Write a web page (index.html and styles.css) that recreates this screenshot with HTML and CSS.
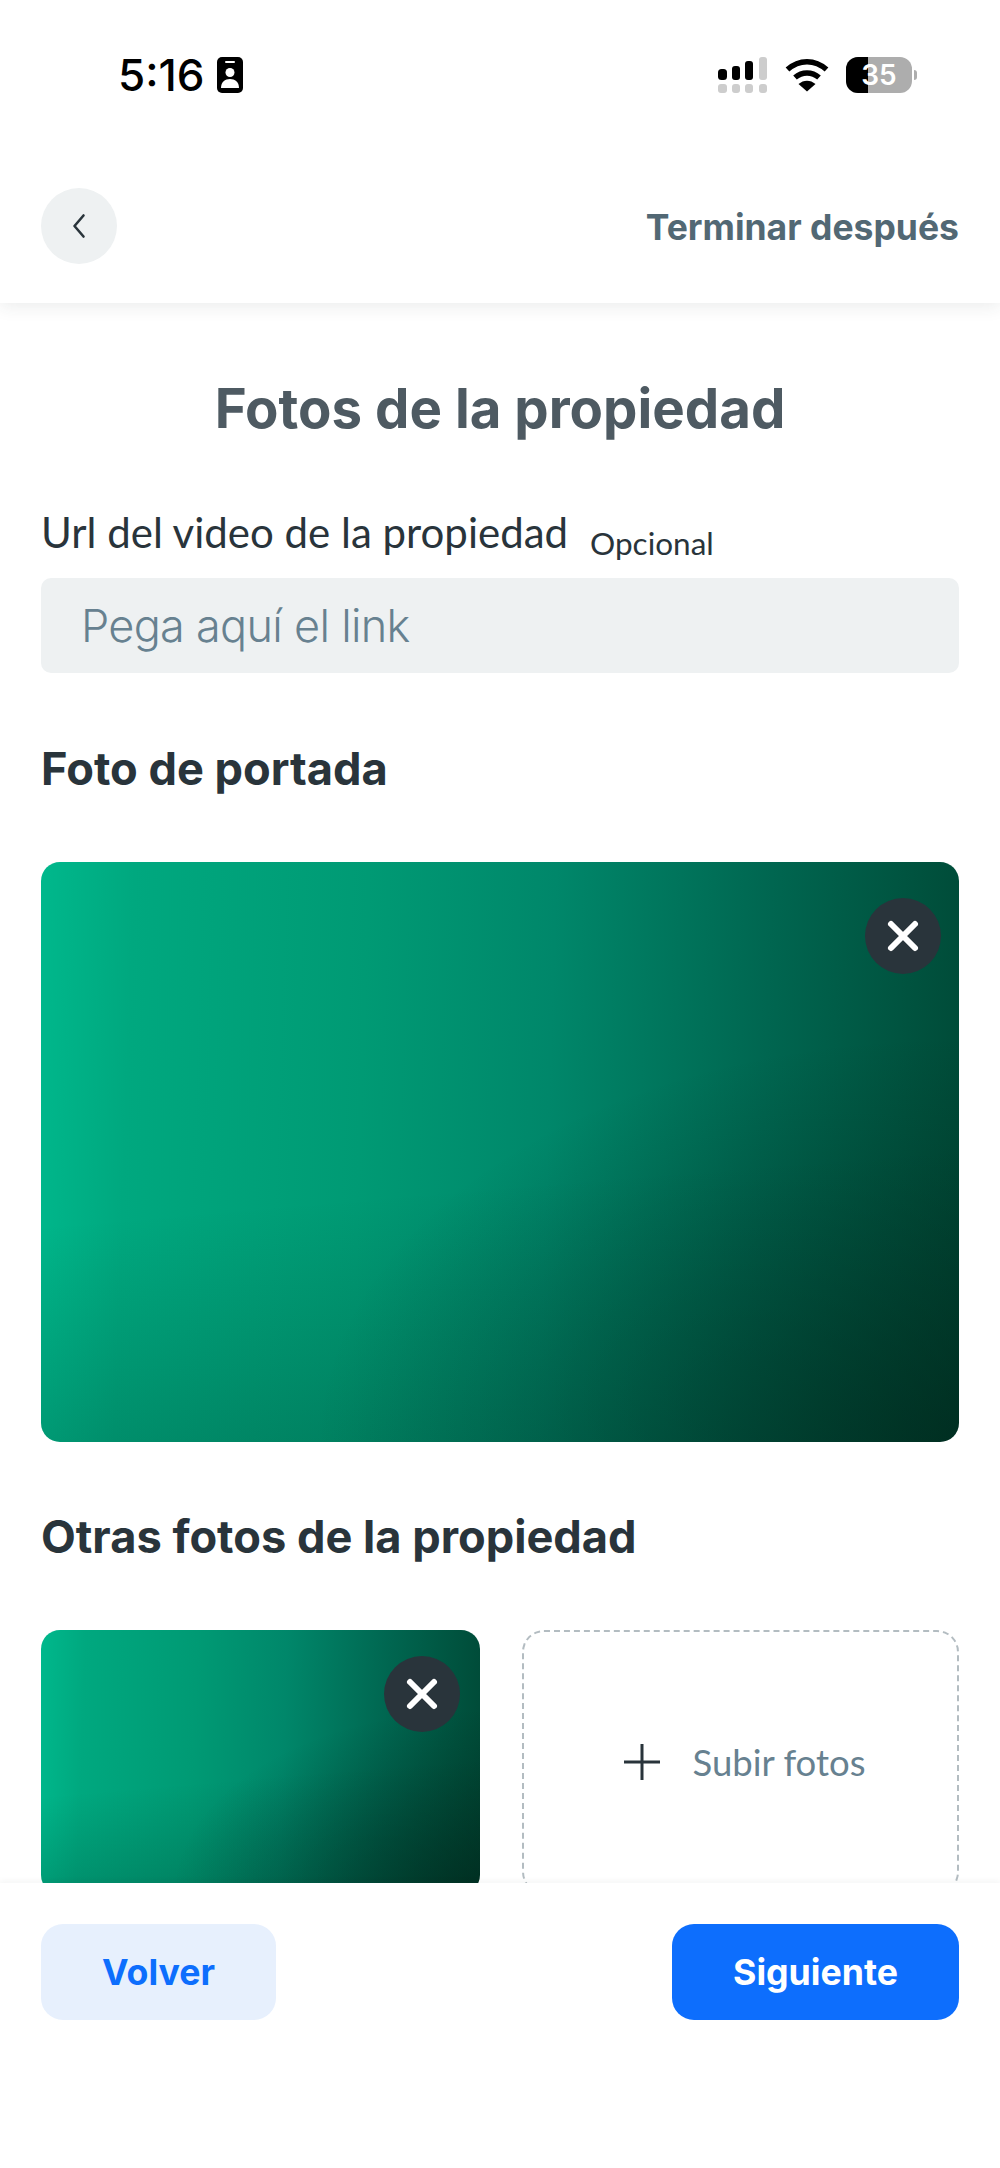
FILE: index.html
```html
<!DOCTYPE html>
<html lang="es">
<head>
<meta charset="utf-8">
<title>Fotos de la propiedad</title>
<link rel="stylesheet" href="styles.css">
</head>
<body>
<div class="screen">
  <div class="top">
    <div class="status">
      <div class="status-left">
        <span class="time">5:16</span>
        <svg class="badge" width="28" height="36" viewBox="0 0 28 36"><rect x="1" y="0" width="26" height="36" rx="5" fill="#000"/><rect x="9" y="4" width="10" height="2" rx="1" fill="#fff"/><circle cx="14" cy="15.5" r="4.5" fill="#fff"/><path d="M5 31c0-6 4-9 9-9s9 3 9 9z" fill="#fff"/></svg>
      </div>
      <div class="status-right">
        <svg width="50" height="36" viewBox="0 0 50 36"><g fill="#000"><rect x="0" y="12" width="9" height="11" rx="3.5"/><rect x="14" y="9" width="8" height="14" rx="3"/><rect x="27" y="4" width="8" height="19" rx="3"/></g><g fill="#cdcdcd"><rect x="41" y="0" width="8" height="23" rx="3"/><rect x="0" y="27" width="9" height="9" rx="3"/><rect x="14" y="27" width="8" height="9" rx="3"/><rect x="27" y="27" width="8" height="9" rx="3"/><rect x="41" y="27" width="8" height="9" rx="3"/></g></svg>
        <svg class="wifi" width="44" height="34" viewBox="0 0 44 34"><g fill="none" stroke="#000" stroke-width="5.5"><path d="M2.5 11.5C14 1 30 1 41.500 11.500"/><path d="M10 19.500C17 13.500 27 13.500 34 19.500"/></g><path d="M13.500 26C18.500 21.500 25.500 21.500 30.500 26L22 33.500z" fill="#000"/></svg>
        <div class="battery"><div class="battery-body"><span class="battery-level"></span><span class="battery-num">35</span></div><span class="battery-tip"></span></div>
      </div>
    </div>
    <div class="nav">
      <button class="back" type="button" aria-label="Volver"><svg width="16" height="26" viewBox="0 0 16 26"><path d="M12.500 2.500L3.500 13l9 10.500" fill="none" stroke="#29343b" stroke-width="2.600" stroke-linecap="round" stroke-linejoin="round"/></svg></button>
      <span class="later">Terminar después</span>
    </div>
  </div>

  <main class="content">
    <h1 class="title">Fotos de la propiedad</h1>
    <div class="label-row"><span class="label">Url del video de la propiedad</span><span class="optional">Opcional</span></div>
    <div class="input">Pega aquí el link</div>
    <h2 class="section section-cover">Foto de portada</h2>
    <div class="photo photo-cover">
      <button class="remove" type="button" aria-label="Quitar"><svg width="36" height="36" viewBox="0 0 36 36"><path d="M6 6l24 24M30 6L6 30" stroke="#fff" stroke-width="6" stroke-linecap="round"/></svg></button>
    </div>
    <h2 class="section section-other">Otras fotos de la propiedad</h2>
    <div class="grid">
      <div class="photo photo-small">
        <button class="remove" type="button" aria-label="Quitar"><svg width="36" height="36" viewBox="0 0 36 36"><path d="M6 6l24 24M30 6L6 30" stroke="#fff" stroke-width="6" stroke-linecap="round"/></svg></button>
      </div>
      <div class="upload">
        <svg width="40" height="40" viewBox="0 0 40 40"><path d="M20 2v36M2 20h36" stroke="#29343b" stroke-width="3" fill="none"/></svg>
        <span>Subir fotos</span>
      </div>
    </div>
  </main>

  <footer class="footer">
    <button class="btn btn-light" type="button">Volver</button>
    <button class="btn btn-primary" type="button">Siguiente</button>
  </footer>
</div>
</body>
</html>
```

FILE: styles.css
```css
* { box-sizing: border-box; }
html, body { margin: 0; padding: 0; }
body { background: #fff; font-family: "Inter", "Liberation Sans", sans-serif; }
button { border: 0; padding: 0; font: inherit; cursor: pointer; }
.screen { width: 1000px; height: 2168px; display: flex; flex-direction: column; overflow: hidden; background: #fff; }

.top { height: 303px; flex: none; background: #fff; box-shadow: 0 4px 16px rgba(40,52,60,.09); position: relative; z-index: 1; }
.status { height: 188px; padding: 57px 40px 0 118px; display: flex; justify-content: space-between; align-items: flex-start; }
.status-left { display: flex; align-items: center; gap: 11px; }
.time { font-size: 44px; font-weight: 500; line-height: 36px; color: #000; }
.status-right { display: flex; align-items: center; gap: 17px; margin-right: 43px; }
.wifi { display: block; }
.battery { display: flex; align-items: center; gap: 2px; }
.battery-body { position: relative; width: 66px; height: 36px; border-radius: 12px; background: #adadad; overflow: hidden; display: flex; align-items: center; justify-content: center; }
.battery-level { position: absolute; left: 0; top: 0; bottom: 0; width: 22px; background: #000; }
.battery-num { position: relative; color: #fff; font-size: 28px; font-weight: 600; line-height: 1; }
.battery-tip { width: 3px; height: 10px; border-radius: 0 5px 5px 0; background: #adadad; }

.nav { display: flex; justify-content: space-between; align-items: center; padding: 0 41px; height: 76px; }
.back { width: 76px; height: 76px; border-radius: 50%; background: #eef1f2; display: flex; align-items: center; justify-content: center; }
.later { font-size: 35.500px; font-weight: 700; color: #526874; padding-top: 2px; }

.content { flex: 1; min-height: 0; padding: 0 41px; overflow: hidden; }
.title { margin: 71px 0 0; text-align: center; font-size: 54.600px; line-height: 68px; font-weight: 700; color: #4e5a62; }
.label-row { display: flex; align-items: baseline; margin-top: 68px; height: 44px; }
.label { font-family: "Lato", sans-serif; font-size: 42px; line-height: 44px; color: #29343b; }
.optional { font-family: "Lato", sans-serif; font-size: 31.500px; color: #29343b; margin-left: 22px; position: relative; top: 7px; }
.input { margin-top: 24px; height: 95px; border-radius: 10px; background: #eef1f2; padding: 0 40px; display: flex; align-items: center; font-weight: 350; font-size: 45px; letter-spacing: -0.7px; color: #678190; }
.section { margin: 0; font-size: 45.200px; line-height: 52px; font-weight: 700; color: #29343b; }
.section-cover { margin-top: 70px; }
.section-other { margin-top: 69px; }
.photo { position: relative; border-radius: 19px; overflow: hidden;
  background:
    radial-gradient(ellipse 70% 70% at 100% 100%, rgba(0,30,20,.5) 0%, rgba(0,30,20,0) 100%),
    linear-gradient(175deg, rgba(0,30,20,0) 55%, rgba(0,30,20,.25) 100%),
    linear-gradient(92deg, #00b88c 0%, #00a87f 10%, #009a74 35%, #00876a 55%, #006650 78%, #004a37 100%); }
.photo-cover { margin-top: 67px; height: 580px; }
.remove { position: absolute; width: 76px; height: 76px; border-radius: 50%; background: #29343b; display: flex; align-items: center; justify-content: center; }
.photo-cover .remove { top: 36px; right: 18px; }
.photo-small .remove { top: 26px; right: 20px; }
.grid { display: grid; grid-template-columns: 439px 437px; justify-content: space-between; margin-top: 67px; }
.photo-small { height: 264px; }
.upload { height: 264px; border: 2px dashed #b3bcc1; border-radius: 22px; padding-left: 6px; display: flex; align-items: center; justify-content: center; gap: 31px; font-family: "Lato", sans-serif; font-size: 36.500px; color: #678190; }

.footer { flex: none; height: 285px; background: #fff; padding: 41px 41px 0; display: flex; justify-content: space-between; align-items: flex-start; box-shadow: 0 -2px 6px rgba(40,52,60,.05); position: relative; z-index: 1; }
.btn { height: 96px; border-radius: 22px; font-size: 35.700px; font-weight: 700; }
.btn-light { width: 235px; background: #e7f0fd; color: #0d6efd; }
.btn-primary { width: 287px; background: #0d6efd; color: #fff; }
```
